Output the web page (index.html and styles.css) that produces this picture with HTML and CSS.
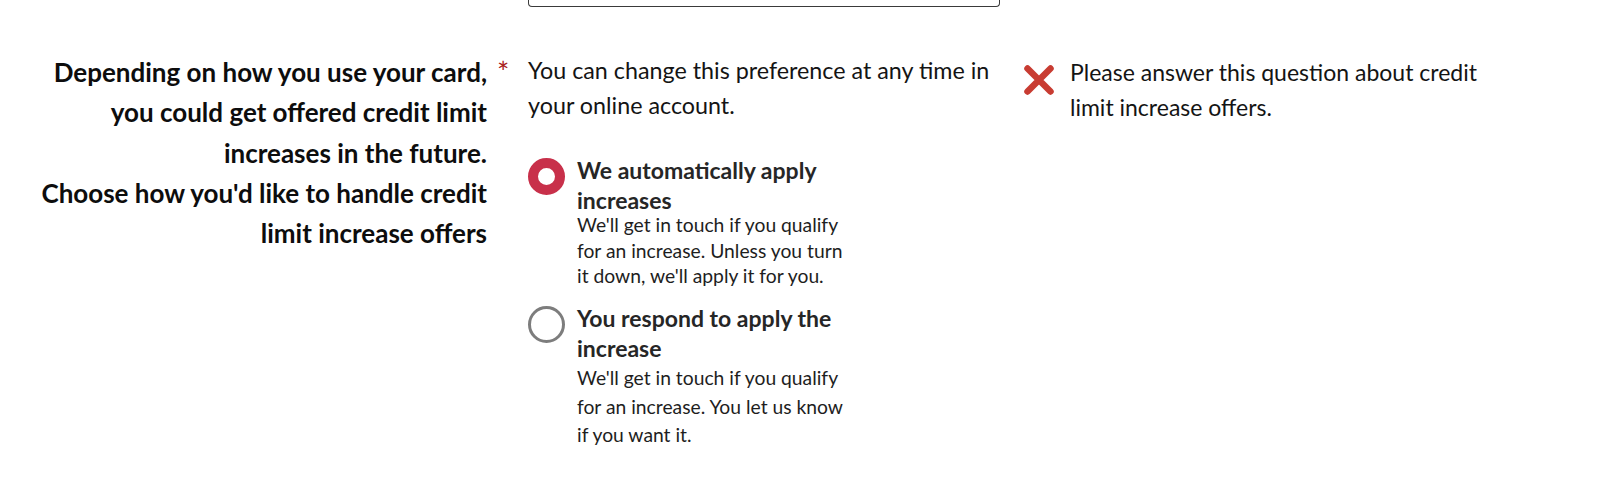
FILE: index.html
```html
<!DOCTYPE html>
<html lang="en">
<head>
<meta charset="utf-8">
<title>Credit limit increase preference</title>
<link rel="stylesheet" href="styles.css">
</head>
<body>
<div class="page">
  <div class="prev-row">
    <div class="prev-input"></div>
  </div>
  <div class="question">
    <div class="label">
      <p class="label-line">Depending on how you use your card, you could get offered credit limit increases in the future.</p>
      <p class="label-line">Choose how you'd like to handle credit limit increase offers</p>
    </div>
    <div class="req">*</div>
    <div class="field">
      <p class="hint">You can change this preference at any time in your online account.</p>
      <div class="options">
        <label class="option">
          <span class="radio radio-on"></span>
          <span class="opt-text">
            <span class="opt-title">We automatically apply increases</span>
            <span class="opt-desc">We'll get in touch if you qualify for an increase. Unless you turn it down, we'll apply it for you.</span>
          </span>
        </label>
        <label class="option">
          <span class="radio"></span>
          <span class="opt-text">
            <span class="opt-title">You respond to apply the increase</span>
            <span class="opt-desc opt-desc-loose">We'll get in touch if you qualify for an increase. You let us know if you want it.</span>
          </span>
        </label>
      </div>
    </div>
    <div class="error">
      <svg class="error-icon" viewBox="0 0 32 32" width="32" height="32" aria-hidden="true">
        <path d="M4.5 4.5 L27.5 27.5 M27.5 4.5 L4.5 27.5" stroke="#c83c32" stroke-width="6.5" stroke-linecap="round" fill="none"/>
      </svg>
      <p class="error-text">Please answer this question about credit limit increase offers.</p>
    </div>
  </div>
</div>
</body>
</html>
```
FILE: styles.css
```css
html, body {
  margin: 0;
  padding: 0;
  background: #ffffff;
}

body {
  font-family: Lato, "Open Sans", "Liberation Sans", sans-serif;
  color: #111111;
}

.page {
  width: 1600px;
}

.prev-row {
  display: grid;
  grid-template-columns: 528px 472px;
}

.prev-input {
  grid-column: 2;
  height: 6px;
  border: 1px solid #3a3a3a;
  border-top: none;
  border-radius: 0 0 4px 4px;
}

.question {
  display: grid;
  grid-template-columns: 487px 41px 495px 1fr;
  margin-top: 45px;
}

.label {
  text-align: right;
  padding-left: 34px;
}

.label-line {
  margin: 0;
  font-weight: 700;
  font-size: 26px;
  line-height: 40.3px;
  color: #0d0d0d;
}

.req {
  color: #a8201a;
  font-size: 29px;
  line-height: 40px;
  padding-left: 10px;
}

.field {
  width: 470px;
  padding-top: 1px;
}

.hint {
  margin: 0;
  font-size: 23.3px;
  line-height: 35px;
  color: #141414;
}

.options {
  display: flex;
  flex-direction: column;
  gap: 15.5px;
  margin-top: 33px;
}

.option {
  display: flex;
  gap: 12px;
  align-items: flex-start;
}

.radio {
  flex: none;
  box-sizing: border-box;
  width: 37px;
  height: 37px;
  margin-top: 1.5px;
  border-radius: 50%;
  border: 3px solid #7d7d7d;
  background: #ffffff;
}

.radio-on {
  border: 10.5px solid #c8304a;
}

.opt-text {
  display: flex;
  flex-direction: column;
  width: 278px;
}

.opt-title {
  font-weight: 700;
  font-size: 23px;
  line-height: 29.5px;
  color: #262626;
}

.opt-desc {
  font-size: 19.3px;
  line-height: 25.5px;
  color: #1e1e1e;
  margin-top: -3px;
}

.opt-desc-loose {
  line-height: 28.5px;
  margin-top: 1px;
}

.error {
  display: flex;
  gap: 15px;
  align-items: flex-start;
  padding-top: 3px;
}

.error-icon {
  flex: none;
  margin-top: 9px;
}

.error-text {
  margin: 0;
  width: 425px;
  font-size: 23px;
  line-height: 35px;
  color: #141414;
}
```
